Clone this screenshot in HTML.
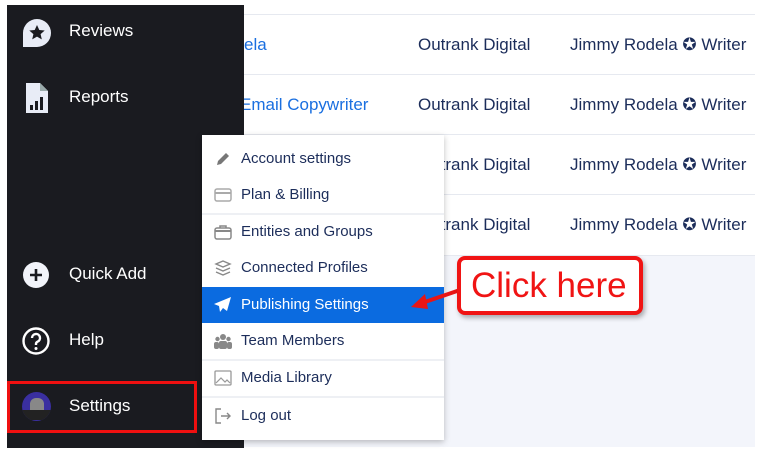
<!DOCTYPE html><html><head><style>
body{margin:0;width:766px;height:456px;background:#fff;position:relative;overflow:hidden;font-family:"Liberation Sans",sans-serif}
.a{position:absolute}
.side{left:7px;top:5px;width:237px;height:443px;background:#1a1b20}
.si{position:absolute;left:62px;color:#fff;font-size:17px;}
.row{position:absolute;left:244px;width:511px;height:60px;border-top:1px solid #e6e9f0;background:#fff}
.row span{position:absolute;top:20px;font-size:17px;color:#1c2d5a}
.dd{left:202px;top:135px;width:242px;height:305px;background:#fff;box-shadow:0 2px 6px rgba(0,0,0,.25)}
.it{position:absolute;left:0;width:242px;height:36px;line-height:36px;font-size:15px;color:#1c2d5a}
.it b{font-weight:normal;position:absolute;left:39px}
.ic{position:absolute;left:12px;top:10px;width:18px;height:16px}
.hr{position:absolute;left:0;width:242px;height:2px;background:#eef0f4}
</style></head><body>
<div class="a" style="left:244px;top:255px;width:511px;height:192px;background:#f3f5fb"></div>
<div class="row" style="top:14px"><span style="left:0;color:#1a6fe0">ela</span><span style="left:174px">Outrank Digital</span><span style="left:326px">Jimmy Rodela ✪ Writer</span></div>
<div class="row" style="top:74px"><span style="left:-4px;color:#1a6fe0">Email Copywriter</span><span style="left:174px">Outrank Digital</span><span style="left:326px">Jimmy Rodela ✪ Writer</span></div>
<div class="row" style="top:134px"><span style="left:174px">Outrank Digital</span><span style="left:326px">Jimmy Rodela ✪ Writer</span></div>
<div class="row" style="top:194px;border-bottom:1px solid #e6e9f0"><span style="left:174px">Outrank Digital</span><span style="left:326px">Jimmy Rodela ✪ Writer</span></div>
<div class="a side">
<svg class="a" style="left:15px;top:13px" width="30" height="30" viewBox="0 0 30 30"><path d="M15 1a14 14 0 1 1 0 28H1V15A14 14 0 0 1 15 1z" fill="#e8ecf6"/><path d="M15 7l2.3 5 5.4.5-4.1 3.6 1.2 5.3L15 18.6l-4.8 2.8 1.2-5.3-4.1-3.6 5.4-.5z" fill="#1a1b20"/></svg>
<div class="si" style="top:16px">Reviews</div>
<svg class="a" style="left:19px;top:78px" width="22" height="30" viewBox="0 0 22 30"><path d="M0 0h14l8 8v22H0z" fill="#e8ecf6"/><path d="M14 0v8h8" fill="#9aa"/><rect x="4" y="22" width="3" height="5" fill="#1a1b20"/><rect x="9" y="18" width="3" height="9" fill="#1a1b20"/><rect x="14" y="14" width="3" height="13" fill="#1a1b20"/></svg>
<div class="si" style="top:82px">Reports</div>
<svg class="a" style="left:16px;top:257px" width="26" height="26"><circle cx="13" cy="13" r="13" fill="#f2f4fa"/><path d="M13 7v12M7 13h12" stroke="#1a1b20" stroke-width="2.6"/></svg>
<div class="si" style="top:259px">Quick Add</div>
<svg class="a" style="left:15px;top:322px" width="28" height="28"><circle cx="14" cy="14" r="12.5" fill="none" stroke="#fff" stroke-width="2.4"/><path d="M10 11a4 4 0 1 1 5.5 3.7c-1 .5-1.5 1.2-1.5 2.3v1" fill="none" stroke="#fff" stroke-width="2.4"/><circle cx="14" cy="21.5" r="1.5" fill="#fff"/></svg>
<div class="si" style="top:325px">Help</div>
<div class="a" style="left:0;top:376px;width:184px;height:46px;border:3px solid #f01010"></div>
<div class="a" style="left:15px;top:387px;width:29px;height:29px;border-radius:50%;background:#3a2fa0;overflow:hidden"><div style="margin:6px auto 0;width:14px;height:16px;background:#888;border-radius:6px 6px 3px 3px"></div><div style="width:29px;height:10px;background:#222;margin-top:-4px"></div></div>
<div class="si" style="top:391px">Settings</div>
</div>
<div class="a dd">
<div class="it" style="top:6px"><svg class="ic" viewBox="0 0 18 16"><path d="M3 14l1-4 8-8 3 3-8 8z" fill="#777"/></svg><b>Account settings</b></div>
<div class="it" style="top:42px"><svg class="ic" viewBox="0 0 18 16"><rect x="1" y="2" width="16" height="12" rx="2" fill="none" stroke="#aaa" stroke-width="1.5"/><path d="M1 6h16" stroke="#aaa" stroke-width="2"/></svg><b>Plan &amp; Billing</b></div>
<div class="hr" style="top:78px"></div>
<div class="it" style="top:79px"><svg class="ic" viewBox="0 0 18 16"><rect x="1" y="4" width="16" height="11" rx="2" fill="none" stroke="#888" stroke-width="1.5"/><path d="M1 7h16" stroke="#888" stroke-width="2"/><path d="M6 4V2h6v2" fill="none" stroke="#888" stroke-width="1.5"/></svg><b>Entities and Groups</b></div>
<div class="it" style="top:115px"><svg class="ic" viewBox="0 0 18 16"><path d="M9 1l7 3-7 3-7-3zM2 8l7 3 7-3M2 12l7 3 7-3" fill="none" stroke="#888" stroke-width="1.4"/></svg><b>Connected Profiles</b></div>
<div class="it" style="top:152px;background:#0b6be0;color:#fff"><svg class="ic" viewBox="0 0 18 16"><path d="M17 0L0 7l5 2 1 6 3-4 4 3z" fill="#fff"/></svg><b>Publishing Settings</b></div>
<div class="it" style="top:188px"><svg class="ic" viewBox="0 0 18 16"><circle cx="9" cy="4" r="3" fill="#888"/><circle cx="3.5" cy="6" r="2.2" fill="#888"/><circle cx="14.5" cy="6" r="2.2" fill="#888"/><rect x="5" y="8" width="8" height="8" rx="2" fill="#888"/><rect x="0" y="9" width="5" height="7" rx="2" fill="#888"/><rect x="13" y="9" width="5" height="7" rx="2" fill="#888"/></svg><b>Team Members</b></div>
<div class="hr" style="top:224px"></div>
<div class="it" style="top:225px"><svg class="ic" viewBox="0 0 18 16"><rect x="1" y="1" width="16" height="14" rx="1" fill="none" stroke="#999" stroke-width="1.3"/><path d="M2 13l5-5 4 4 2-2 3 3" fill="none" stroke="#999" stroke-width="1.2"/></svg><b>Media Library</b></div>
<div class="hr" style="top:261px"></div>
<div class="it" style="top:263px"><svg class="ic" viewBox="0 0 18 16"><path d="M7 1H2v14h5M7 8h9M13 5l3 3-3 3" fill="none" stroke="#888" stroke-width="1.4"/></svg><b>Log out</b></div>
</div>
<svg class="a" style="left:405px;top:275px" width="70" height="40"><path d="M58 14L14 29" stroke="#e81515" stroke-width="4"/><path d="M6 32l14-13 3 15z" fill="#e81515"/></svg>
<div class="a" style="left:457px;top:256px;width:178px;height:51px;border:4px solid #f01414;border-radius:8px;background:#fff;box-shadow:2px 3px 5px rgba(0,0,0,.3);color:#f01414;font-size:35px;line-height:51px;text-indent:10px;white-space:nowrap">Click here</div>
</body></html>
